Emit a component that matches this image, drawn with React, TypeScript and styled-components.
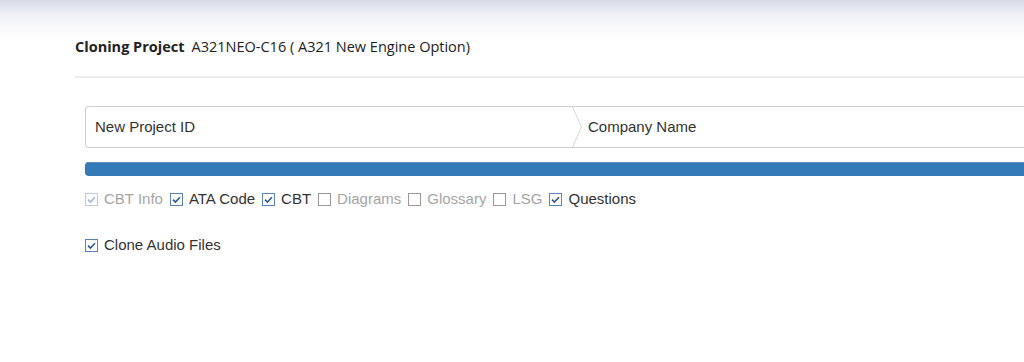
import styled, { createGlobalStyle } from "styled-components";

const GlobalStyle = createGlobalStyle`
  html, body {
    margin: 0;
    padding: 0;
    background: #fff;
    overflow: hidden;
  }
  body {
    font-family: "Liberation Sans", Arial, sans-serif;
    color: #333;
  }
`;

const Page = styled.div`
  width: 1100px;
  height: 362px;
  padding: 0 0 0 75px;
  box-sizing: border-box;
  background: linear-gradient(to bottom, #d7dbe7 0px, #eef0f5 14px, #fafafc 28px, #fff 44px);
`;

const Header = styled.div`
  display: flex;
  align-items: baseline;
  gap: 7px;
  padding-top: 37px;
  height: 39px;
  box-sizing: content-box;
  border-bottom: 2px solid #ececec;
  font-family: "Open Sans", "Noto Sans", sans-serif;
  font-size: 14.5px;
  line-height: 20px;
  color: #222;
`;

const Title = styled.span`
  font-weight: 700;
`;

const Body = styled.div`
  padding: 28px 0 0 10px;
`;

const Steps = styled.div`
  display: flex;
  height: 42px;
  box-sizing: border-box;
  border: 1px solid #d0d0d0;
  border-right: none;
  border-radius: 4px 0 0 4px;
`;

const Step = styled.div<{ $width?: number }>`
  display: flex;
  align-items: center;
  ${(p) => (p.$width ? `width: ${p.$width}px;` : "flex: 1;")}
  padding-left: ${(p) => (p.$width ? 9 : 6)}px;
  padding-bottom: 1px;
  box-sizing: border-box;
  font-size: 15px;
  color: #333;
`;

const Chevron = styled.svg`
  display: block;
  flex: none;
  width: 10px;
  height: 40px;
`;

const Progress = styled.div`
  margin-top: 14px;
  height: 14px;
  background: #337ab7;
  border-radius: 4px 0 0 4px;
  box-shadow: inset 0 1px 0 #5a8fc0;
`;

const Options = styled.div`
  display: flex;
  align-items: center;
  gap: 7px;
  margin-top: 15px;
`;

const Option = styled.label<{ $muted?: boolean }>`
  display: flex;
  align-items: center;
  gap: 6px;
  font-size: 15px;
  line-height: 16px;
  color: ${(p) => (p.$muted ? "#a5a5a5" : "#333")};
`;

const Box = styled.svg`
  display: block;
  width: 13px;
  height: 13px;
  flex: none;
`;

const CloneRow = styled(Options)`
  margin-top: 30px;
`;

type CheckProps = { checked?: boolean; disabled?: boolean };

const CheckBox = ({ checked, disabled }: CheckProps) => {
  const border = disabled ? "#b9cde4" : checked ? "#5a84b8" : "#9a9a9a";
  const tick = disabled ? "#9fbadb" : "#2b5a92";
  return (
    <Box viewBox="0 0 13 13">
      <rect x="0.5" y="0.5" width="12" height="12" fill="#fff" stroke={border} />
      {checked && (
        <path d="M3 6.6 L5.4 9 L10 4.2" fill="none" stroke={tick} strokeWidth="1.6" />
      )}
    </Box>
  );
};

const options = [
  { label: "CBT Info", checked: true, disabled: true },
  { label: "ATA Code", checked: true },
  { label: "CBT", checked: true },
  { label: "Diagrams", muted: true },
  { label: "Glossary", muted: true },
  { label: "LSG", muted: true },
  { label: "Questions", checked: true },
];

export default function App() {
  return (
    <>
      <GlobalStyle />
      <Page>
        <Header>
          <Title>Cloning Project</Title>
          <span>A321NEO-C16 ( A321 New Engine Option)</span>
        </Header>
        <Body>
          <Steps>
            <Step $width={486}>New Project ID</Step>
            <Chevron viewBox="0 0 10 40">
              <path d="M0.5 0 L9.5 20 L0.5 40" fill="none" stroke="#d4d4d4" />
            </Chevron>
            <Step>Company Name</Step>
          </Steps>
          <Progress />
          <Options>
            {options.map((o) => (
              <Option key={o.label} $muted={o.disabled || o.muted}>
                <CheckBox checked={o.checked} disabled={o.disabled} />
                {o.label}
              </Option>
            ))}
          </Options>
          <CloneRow>
            <Option>
              <CheckBox checked />
              Clone Audio Files
            </Option>
          </CloneRow>
        </Body>
      </Page>
    </>
  );
}
